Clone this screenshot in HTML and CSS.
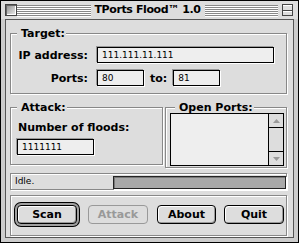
FILE: index.html
```html
<!DOCTYPE html>
<html lang="en">
  <head>
    <meta charset="UTF-8" />
    <title>TPorts Flood 1.0</title>
    <link rel="stylesheet" href="styles.css">
  </head>
  <body>
    <div class="window">
      <div class="titlebar">
        <span class="close-box"></span>
        <span class="stripes"></span>
        <span class="title">TPorts Flood™ 1.0</span>
        <span class="stripes"></span>
        <span class="collapse-box">
          <svg width="11" height="12" viewBox="0 0 11 12">
            <rect x="0.5" y="0.5" width="10" height="11" fill="#ddd" stroke="#444" />
            <line x1="1" y1="6.5" x2="10" y2="6.5" stroke="#444" />
            <line x1="1" y1="1.5" x2="10" y2="1.5" stroke="#fff" />
            <line x1="1" y1="7.5" x2="10" y2="7.5" stroke="#fff" />
          </svg>
        </span>
      </div>

      <div class="content">
        <div class="group target">
          <div class="group-title">Target:</div>
          <div class="row">
            <span class="field-label">IP address:</span>
            <div class="textfield ip">111.111.11.111</div>
          </div>
          <div class="row">
            <span class="field-label">Ports:</span>
            <div class="textfield port">80</div>
            <span class="to-label">to:</span>
            <div class="textfield port">81</div>
          </div>
        </div>

        <div class="middle">
          <div class="group attack">
            <div class="group-title">Attack:</div>
            <div class="floods-label">Number of floods:</div>
            <div class="textfield floods">1111111</div>
          </div>
          <div class="group open-ports">
            <div class="group-title">Open Ports:</div>
            <div class="listbox">
              <div class="list-items"></div>
              <div class="scrollbar">
                <div class="arrow up">
                  <svg width="7" height="4" viewBox="0 0 7 4"><path d="M0 4 L3.5 0 L7 4 Z" fill="#999" /></svg>
                </div>
                <div class="track"></div>
                <div class="arrow down">
                  <svg width="7" height="4" viewBox="0 0 7 4"><path d="M0 0 L7 0 L3.5 4 Z" fill="#999" /></svg>
                </div>
              </div>
            </div>
          </div>
        </div>

        <div class="group status">
          <span class="status-text">Idle.</span>
          <div class="progress"></div>
        </div>

        <div class="group buttons">
          <button class="btn default scan">Scan</button>
          <button class="btn attack-btn" disabled>Attack</button>
          <button class="btn about">About</button>
          <button class="btn quit">Quit</button>
        </div>
      </div>
    </div>
  </body>
</html>
```

FILE: styles.css
```css
* {
  margin: 0;
  padding: 0;
  box-sizing: border-box;
}

body {
  background-color: #fff;
  font-family: "DejaVu Sans", sans-serif;
  color: #000;
}

.window {
  width: 299px;
  height: 243px;
  border: 1px solid #000;
  background-color: #cccccc;
  display: flex;
  flex-direction: column;
}

/* Title bar */
.titlebar {
  height: 18px;
  display: flex;
  align-items: center;
  padding: 0 5px 0 4px;
  background-color: #dddddd;
}

.close-box {
  width: 12px;
  height: 12px;
  border: 1px solid #444;
  background: linear-gradient(135deg, #8a8a8a, #f0f0f0);
  box-shadow: inset 1px 1px 0 #666, inset -1px -1px 0 #fff;
}

.stripes {
  flex: 1;
  height: 12px;
  margin-top: 2px;
  background: repeating-linear-gradient(to bottom, #888 0 1px, #fff 1px 2px);
}

.stripes:first-of-type {
  margin-left: 5px;
}

.title {
  padding: 0 4px;
  font-size: 11px;
  font-weight: bold;
  letter-spacing: -0.4px;
  line-height: 14px;
  white-space: nowrap;
}

.collapse-box {
  width: 11px;
  height: 12px;
  margin-left: 4px;
  display: flex;
}

/* Content */
.content {
  flex: 1;
  margin: 0 4px 4px;
  border: 1px solid #555;
  background-color: #dddddd;
  padding: 13px 6px 0 4px;
  display: flex;
  flex-direction: column;
}

.group {
  border: 1px solid #888;
  box-shadow: inset 1px 1px 0 #fff, 1px 1px 0 #fff;
}

.group-title {
  width: max-content;
  margin: -7px 0 0 6px;
  padding: 0 1px 0 4px;
  background-color: #dddddd;
  font-size: 11px;
  font-weight: bold;
  line-height: 13px;
}

.target {
  padding-bottom: 7px;
}

.row {
  display: flex;
  align-items: center;
  height: 16px;
  margin-top: 7px;
  font-size: 11px;
  font-weight: bold;
}

.field-label {
  width: 77px;
  margin-right: 9px;
  text-align: right;
}

.to-label {
  margin: 0 6px;
}

.textfield {
  height: 16px;
  border: 1px solid #000;
  background-color: #eeeeee;
  box-shadow: -1px -1px 0 #999, 1px 1px 0 #fff;
  padding-left: 4px;
  font-size: 9px;
  font-weight: normal;
  line-height: 14px;
}

.ip {
  width: 177px;
}

.port {
  width: 47px;
}

.middle {
  display: flex;
  align-items: flex-start;
  margin-top: 13px;
}

.attack {
  width: 153px;
  height: 58px;
}

.floods-label {
  margin: 7px 0 0 7px;
  font-size: 11px;
  font-weight: bold;
  line-height: 13px;
}

.floods {
  width: 77px;
  margin: 5px 0 0 6px;
}

.open-ports {
  width: 122px;
  height: 61px;
  margin-left: 2px;
}

.open-ports .group-title {
  margin-left: 9px;
}

.listbox {
  display: flex;
  height: 53px;
  margin: -1px 2px 0 4px;
  border: 1px solid #000;
  background-color: #eeeeee;
}

.list-items {
  flex: 1;
}

.scrollbar {
  width: 15px;
  border-left: 1px solid #000;
  display: flex;
  flex-direction: column;
  background-color: #dddddd;
}

.arrow {
  height: 14px;
  display: flex;
  align-items: center;
  justify-content: center;
}

.arrow.up {
  border-bottom: 1px solid #000;
}

.arrow.down {
  border-top: 1px solid #000;
}

.track {
  flex: 1;
}

/* Status */
.status {
  height: 17px;
  margin-top: 5px;
  display: flex;
  align-items: flex-end;
  padding-left: 4px;
}

.status-text {
  align-self: center;
  font-size: 9px;
  line-height: 11px;
}

.progress {
  width: 173px;
  height: 13px;
  margin-left: auto;
  border: 1px solid #222;
  background-color: #a8a8a8;
  box-shadow: inset 1px 1px 0 #777, 1px 1px 0 #fff;
}

/* Buttons */
.buttons {
  height: 41px;
  margin-top: 5px;
  display: flex;
  align-items: flex-start;
  padding: 9px 0 0 6px;
}

.btn {
  height: 19px;
  border: 1px solid #000;
  border-radius: 4px;
  background-color: #dddddd;
  box-shadow: inset 1px 1px 0 #fff, inset -1px -1px 0 #999;
  font-family: "DejaVu Sans", sans-serif;
  font-size: 11px;
  font-weight: bold;
  color: #000;
}

.btn.default {
  box-shadow: inset 1px 1px 0 #fff, inset -1px -1px 0 #999, 0 0 0 2px #a0a0a0, 0 0 0 3px #000;
}

.btn:disabled {
  border-color: #999;
  color: #999;
  box-shadow: none;
}

.scan {
  width: 60px;
}

.attack-btn {
  width: 60px;
  margin-left: 11px;
}

.about {
  width: 59px;
  margin-left: 9px;
}

.quit {
  width: 60px;
  margin-left: 8px;
}
```
